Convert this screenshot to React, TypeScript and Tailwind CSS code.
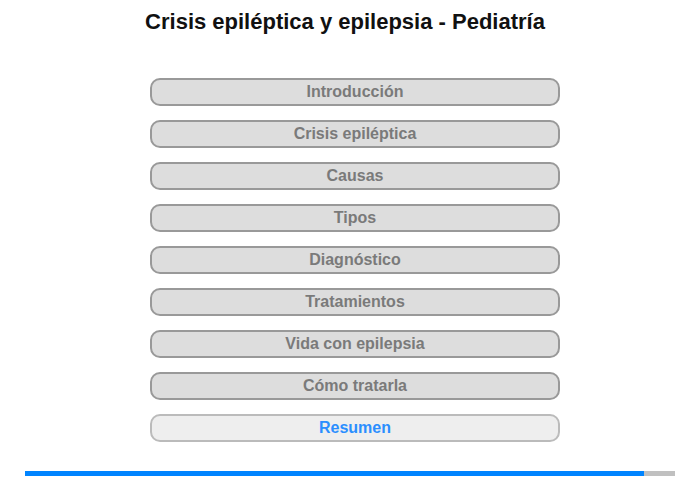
const items = [
  'Introducción',
  'Crisis epiléptica',
  'Causas',
  'Tipos',
  'Diagnóstico',
  'Tratamientos',
  'Vida con epilepsia',
  'Cómo tratarla',
];

export default function App() {
  return (
    <div className="w-[700px] h-[480px] bg-white flex flex-col items-center" style={{ fontFamily: '"Liberation Sans", Arial, sans-serif' }}>
      <h1 className="mt-[9px] mr-[10px] h-[26px] text-[22px] leading-[26px] font-bold text-[#111]">
        Crisis epiléptica y epilepsia - Pediatría
      </h1>
      <div className="mt-[43px] ml-[10px] flex flex-col gap-[14px] w-[410px]">
        {items.map((t) => (
          <button
            key={t}
            className="h-[28px] w-full rounded-[10px] border-2 border-[#999] bg-[#ddd] text-[16px] font-bold text-[#7a7a7a] leading-none"
          >
            {t}
          </button>
        ))}
        <button className="h-[28px] w-full rounded-[10px] border-2 border-[#bbb] bg-[#eee] text-[16px] font-bold text-[#2b8eff] leading-none">
          Resumen
        </button>
      </div>
      <div className="mt-[29px] w-[650px] h-[5px] bg-[#c0c0c0] flex">
        <div className="w-[619px] h-full bg-[#0084ff]" />
      </div>
    </div>
  );
}
